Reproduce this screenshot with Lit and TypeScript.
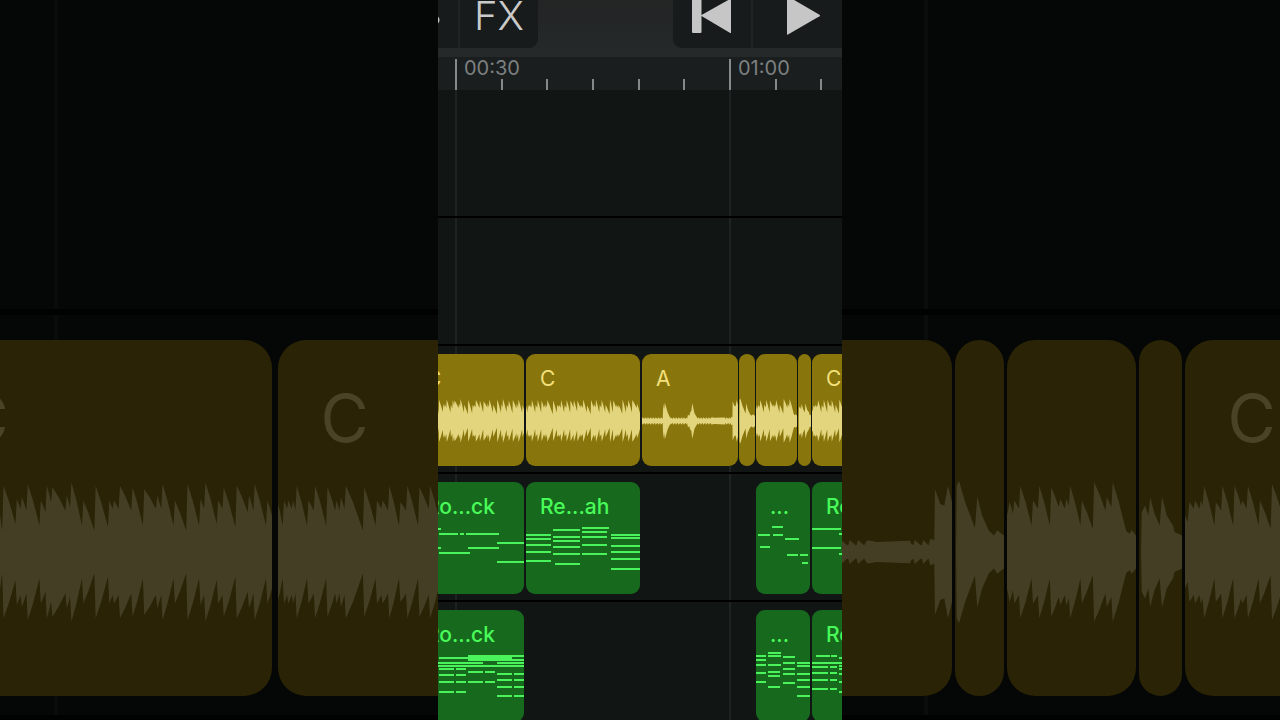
import { LitElement, html, svg, css } from "lit";
import { customElement, property } from "lit/decorators.js";

type Point = [number, number];
type Tooth = [number, number, number];
type Note = [number, number, number];

interface AudioClip {
  label: string;
  size: number;
  wide: number;
  span: number;
  tight?: boolean;
  wave: Point[];
}

interface MidiClip {
  label?: string;
  size: number;
  notes?: Note[];
}

// Each tooth is [time, peak, valley]: a steep attack and a decay down to the valley before the next one.
const teeth = (list: Tooth[], end: number): Point[] =>
  list.flatMap(([x, peak, valley], i): Point[] => {
    const next = i + 1 < list.length ? list[i + 1][0] - 4 : end;
    const gap = next - x;
    return [
      [x, peak],
      [x + gap * 0.45, valley + (peak - valley) * 0.6],
      [next, valley],
    ];
  });

const quiet = (from: number, to: number): Point[] => {
  const out: Point[] = [];
  for (let x = from; x < to; x += 25) out.push([x, 22], [x + 4, 36], [Math.min(x + 22, to), 20]);
  return out;
};

const VERSE = teeth(
  [
    [0, 150, 110], [240, 150, 65], [257, 200, 85], [297, 160, 130], [312, 165, 125], [330, 205, 80], [369, 155, 120],
    [387, 200, 150], [404, 195, 125], [447, 170, 135], [461, 210, 80], [497, 155, 65], [534, 200, 75],
    [575, 155, 130], [589, 155, 130], [607, 200, 125], [645, 195, 80], [680, 190, 130], [719, 170, 130],
    [735, 205, 80], [772, 155, 65], [810, 205, 80], [849, 160, 130], [864, 210, 85], [902, 155, 130],
    [919, 195, 75], [958, 200, 120], [995, 170, 125], [1012, 205, 80], [1050, 155, 110],
  ],
  1064,
);

const CHORUS = teeth(
  [
    [0, 145, 80], [18, 155, 130], [31, 155, 130], [45, 155, 125], [56, 200, 80], [91, 155, 125], [111, 200, 80],
    [148, 195, 125], [175, 155, 125], [188, 165, 130], [203, 200, 65], [258, 195, 80], [296, 155, 130],
    [313, 155, 125], [333, 200, 80], [366, 150, 125], [387, 200, 80], [423, 195, 130], [455, 200, 90],
    [489, 195, 125], [520, 155, 125], [544, 205, 80], [581, 150, 65], [618, 200, 130], [645, 160, 130],
    [665, 205, 80], [700, 155, 125], [719, 200, 80], [756, 155, 65], [798, 205, 80], [829, 195, 130],
    [860, 155, 125], [880, 155, 70], [918, 205, 80], [953, 155, 125], [972, 200, 80], [1010, 200, 125],
    [1055, 165, 75],
  ],
  1083,
);

const BREAK: Point[] = [
  ...quiet(0, 200), [203, 170], [210, 110], [218, 175], [245, 80], [266, 35], ...quiet(268, 430),
  [438, 60], [452, 50], [458, 80], [470, 95], [480, 170], [500, 75], [526, 30], ...quiet(530, 655),
  [662, 35], [690, 30], [789, 34], [795, 22], ...quiet(800, 845), [850, 40], [862, 35], [864, 190],
  [880, 145], [892, 140], [903, 200], [915, 150],
];

const FILL: Point[] = [
  [0, 0], [3, 0], [5, 200], [12, 215], [30, 150], [59, 72], [66, 168], [80, 110], [100, 65], [115, 50], [125, 65], [145, 50],
];

const BRIDGE: Point[] = [
  [0, 110],
  ...teeth(
    [
      [8, 150, 115], [22, 155, 130], [40, 200, 80], [78, 155, 130], [97, 200, 80], [133, 195, 135], [160, 160, 130],
      [178, 160, 140], [190, 200, 80], [225, 155, 70], [262, 210, 125], [300, 165, 135], [318, 210, 65],
      [362, 60, 55], [374, 66, 50],
    ],
    388,
  ),
];

const TURN: Point[] = [
  [0, 0], [6, 0], [8, 120], [18, 140], [28, 110], [33, 165], [46, 115], [61, 80], [68, 168], [82, 110], [100, 80], [105, 60], [127, 50],
];

const OUTRO: Point[] = [
  [0, 110], [8, 90],
  ...teeth(
    [
      [13, 150, 130], [30, 155, 130], [47, 155, 140], [57, 200, 80], [92, 150, 125], [112, 200, 80], [148, 200, 140],
      [172, 155, 130], [188, 200, 80], [224, 155, 70], [260, 205, 130], [290, 155, 80], [320, 195, 120],
    ],
    532,
  ),
];

const AUDIO: AudioClip[] = [
  { label: "C", size: 112, wide: 354, span: 1064, wave: VERSE },
  { label: "C", size: 114, wide: 362, span: 1083, wave: CHORUS },
  { label: "A", size: 96, wide: 306, span: 915, tight: true, wave: BREAK },
  { label: "", size: 16, wide: 49, span: 145, tight: true, wave: FILL },
  { label: "", size: 41, wide: 129, span: 388, tight: true, wave: BRIDGE },
  { label: "", size: 13, wide: 43, span: 127, tight: true, wave: TURN },
  { label: "C", size: 56, wide: 178, span: 532, wave: OUTRO },
];

const stack = (x: number, w: number, ys: number[]): Note[] => ys.map((y) => [x, y, w] as Note);

const ROCK: Note[] = [
  [0, 46, 29], [27, 51, 19], [48, 51, 4], [54, 51, 33], [85, 60, 27], [0, 65, 29], [56, 65, 31], [27, 70, 31], [85, 79, 27],
];

const KEYS: MidiClip[] = [
  { label: "Ro...ck", size: 112, notes: ROCK },
  {
    label: "Re...ah",
    size: 114,
    notes: [
      ...stack(0, 25, [52, 56, 62, 69, 78]),
      ...stack(27, 27, [47, 54, 58, 64, 71]), [29, 81, 25],
      ...stack(56, 25, [49, 54, 62, 71]), [56, 45, 27],
      ...stack(85, 29, [52, 55, 63, 69, 76, 86]),
    ],
  },
  { size: 112 },
  {
    label: "...",
    size: 54,
    notes: [[16, 44, 11], [2, 52, 12], [17, 52, 10], [29, 56, 14], [4, 64, 10], [31, 72, 11], [44, 72, 8], [46, 80, 6]],
  },
  { label: "Re...ah", size: 56, notes: [[0, 46, 29], [27, 51, 19], [0, 65, 29], [27, 71, 29]] },
];

const PADS: MidiClip[] = [
  {
    label: "Ro...ck",
    size: 112,
    notes: [
      [56, 45, 56], [27, 47, 73], [56, 49, 56], [0, 52, 71], [85, 52, 27], [0, 55, 112],
      ...stack(27, 15, [58, 64, 71, 81]), ...stack(44, 10, [58, 64, 71, 81]),
      ...stack(56, 15, [61, 71]), ...stack(73, 10, [61, 71]),
      ...stack(85, 15, [63, 69, 76, 85]), ...stack(102, 10, [63, 69, 76, 85]),
    ],
  },
  { size: 228 },
  {
    label: "...",
    size: 54,
    notes: [
      ...stack(0, 10, [45, 49, 54, 62, 71]),
      ...stack(12, 13, [42, 45, 54]), ...stack(12, 12, [61, 65, 76]),
      ...stack(27, 12, [46, 52, 58, 63, 72]),
      ...stack(41, 13, [52, 55, 63, 69, 76, 85]),
    ],
  },
  {
    label: "Re...ah",
    size: 56,
    notes: [
      [4, 45, 14], [19, 45, 6], [0, 52, 40],
      ...stack(0, 16, [56, 62, 69, 78]), ...stack(18, 7, [56, 62, 69, 78]),
      ...stack(27, 14, [47, 55, 58, 63, 71, 81]),
    ],
  },
];

const outline = (wave: Point[]): string => {
  const top = wave.map(([x, a]) => `${x},${220 - a}`);
  const bottom = [...wave].reverse().map(([x, a]) => `${x},${220 + a}`);
  return [...top, ...bottom].join(" ");
};

@customElement("audio-lane")
export class AudioLane extends LitElement {
  @property({ type: Boolean, reflect: true }) zoomed = false;

  static styles = css`
    :host {
      --radius: 9px;
      --gap: 2px;
      --tight: 1px;
      --clip: #88750b;
      --wave: #e2d57e;
      --name: #f3e07c;
      display: flex;
      justify-content: center;
      height: 112px;
      overflow: hidden;
      font-size: 21px;
      line-height: 24px;
    }
    :host([zoomed]) {
      --radius: 28px;
      --gap: 6px;
      --tight: 3px;
      --clip: #2a2305;
      --wave: #443e25;
      --name: #4a4425;
      height: 356px;
      font-size: 66px;
      line-height: 76px;
    }
    .clip {
      display: grid;
      grid-template-rows: 39% 41%;
      flex: none;
      margin-right: var(--gap);
      border-radius: var(--radius);
      background: var(--clip);
      overflow: hidden;
    }
    .clip.tight {
      margin-right: var(--tight);
    }
    .clip:last-child {
      margin-right: 0;
    }
    .name {
      padding: 13px 0 0 14px;
      color: var(--name);
    }
    :host([zoomed]) .name {
      padding: 40px 0 0 43px;
    }
    .wave {
      display: block;
      width: 100%;
      height: 100%;
      fill: var(--wave);
    }
  `;

  render() {
    return AUDIO.map(
      (c) => html`
        <div class="clip ${c.tight ? "tight" : ""}" style="width:${this.zoomed ? c.wide : c.size}px">
          <span class="name">${c.label}</span>
          <svg class="wave" viewBox="0 0 ${c.span} 440" preserveAspectRatio="none" aria-hidden="true">
            <polygon points=${outline(c.wave)}></polygon>
          </svg>
        </div>
      `,
    );
  }
}

@customElement("midi-lane")
export class MidiLane extends LitElement {
  @property({ attribute: false }) clips: MidiClip[] = [];

  static styles = css`
    :host {
      display: flex;
      justify-content: center;
      gap: 2px;
      height: 112px;
      font-size: 21px;
      line-height: 24px;
    }
    .clip,
    .rest {
      flex: none;
    }
    .clip {
      display: grid;
      border-radius: 9px;
      background: #17691e;
      overflow: hidden;
    }
    .name,
    .notes {
      grid-area: 1 / 1;
    }
    .name {
      padding: 13px 0 0 14px;
      color: #48fb59;
      font-weight: 500;
      white-space: nowrap;
    }
    .notes {
      display: block;
      fill: #4af35b;
    }
  `;

  render() {
    return this.clips.map((c) =>
      c.notes
        ? html`
            <div class="clip" style="width:${c.size}px">
              <span class="name">${c.label}</span>
              <svg class="notes" width=${c.size} height="112" aria-hidden="true">
                ${c.notes.map(([x, y, w]) => svg`<rect x=${x} y=${y} width=${w} height="2"></rect>`)}
              </svg>
            </div>
          `
        : html`<div class="rest" style="width:${c.size}px"></div>`,
    );
  }
}

@customElement("time-ruler")
export class TimeRuler extends LitElement {
  static styles = css`
    :host {
      display: flex;
      height: 33px;
      padding-left: 17px;
      background: #1a1e1f;
      overflow: hidden;
      color: #7d8080;
      font-size: 20px;
      line-height: 18px;
    }
    .span {
      display: grid;
      grid-template-columns: repeat(6, minmax(0, 1fr));
      align-items: end;
      flex: none;
      width: 274px;
    }
    .tick {
      box-sizing: border-box;
      height: 11px;
      border-left: 2px solid #85898a;
    }
    .major {
      height: 31px;
      padding-left: 7px;
      white-space: nowrap;
    }
  `;

  render() {
    return ["00:30", "01:00"].map(
      (t) => html`
        <div class="span">
          <div class="tick major">${t}</div>
          ${[1, 2, 3, 4, 5].map(() => html`<div class="tick"></div>`)}
        </div>
      `,
    );
  }
}

@customElement("transport-bar")
export class TransportBar extends LitElement {
  static styles = css`
    :host {
      display: flex;
      justify-content: space-between;
      align-items: flex-start;
      height: 57px;
      background: linear-gradient(#232525, #252929);
      overflow: hidden;
    }
    .group {
      display: flex;
      gap: 2px;
      height: 48px;
      background: #202424;
      overflow: hidden;
    }
    .left {
      border-radius: 0 0 9px 0;
    }
    .right {
      border-radius: 0 0 0 9px;
    }
    button {
      display: block;
      width: 78px;
      height: 48px;
      margin: 0;
      padding: 0;
      border: 0;
      background: #181b1b;
      color: #cacaca;
      font: 300 40px / 30px Inter, "Liberation Sans", sans-serif;
    }
    .edge {
      width: 20px;
    }
    .fx {
      padding-bottom: 16px;
    }
    .play {
      width: 89px;
    }
    svg {
      display: block;
      fill: #c6c6c6;
    }
  `;

  render() {
    return html`
      <div class="group left">
        <button class="edge" aria-label="Track controls">
          <svg width="20" height="48"><circle cx="-3" cy="20" r="4.5"></circle></svg>
        </button>
        <button class="fx">FX</button>
      </div>
      <div class="group right">
        <button aria-label="Go to start">
          <svg width="78" height="48">
            <path d="M19 0h9.500v15L57-1h1v33.500q0 .8-.8.4L28.500 16v16q0 1-1 1h-7.500q-1 0-1-1z"></path>
          </svg>
        </button>
        <button class="play" aria-label="Play">
          <svg width="89" height="48">
            <path d="M34-4v38q0 1 1 .6L66.500 16.200q1-.7 0-1.400L36-3z"></path>
          </svg>
        </button>
      </div>
    `;
  }
}

@customElement("app-root")
export class AppRoot extends LitElement {
  static styles = css`
    :host {
      display: grid;
      height: 100vh;
      grid-template: 100% / 100%;
      background: #050606;
      overflow: hidden;
      font-family: Inter, "Liberation Sans", sans-serif;
    }
    .backdrop,
    .screen {
      grid-area: 1 / 1;
      overflow: hidden;
    }
    .backdrop {
      background: repeating-linear-gradient(90deg, #0a0c0c 0 4px, transparent 4px 870px) 54px 0 no-repeat, #050606;
    }
    .far {
      box-sizing: border-box;
      border-bottom: 6px solid #010101;
    }
    .far.empty {
      height: 315px;
    }
    .far.audio {
      padding: 25px 0 19px;
    }
    .screen {
      display: flex;
      flex-direction: column;
      justify-self: center;
      height: 100%;
      aspect-ratio: 101 / 180;
      background: #111514;
    }
    .lanes {
      flex: 1;
      overflow: hidden;
      background: repeating-linear-gradient(90deg, #1e2222 0 2px, transparent 2px 274px) 17px 0 no-repeat, #111514;
    }
    .lane {
      box-sizing: border-box;
      height: 128px;
      padding-top: 8px;
      border-bottom: 2px solid #000;
    }
  `;

  render() {
    return html`
      <div class="backdrop" aria-hidden="true">
        <div class="far empty"></div>
        <div class="far audio"><audio-lane zoomed></audio-lane></div>
      </div>
      <main class="screen">
        <transport-bar></transport-bar>
        <time-ruler></time-ruler>
        <div class="lanes">
          <div class="lane"></div>
          <div class="lane"></div>
          <div class="lane"><audio-lane></audio-lane></div>
          <div class="lane"><midi-lane .clips=${KEYS}></midi-lane></div>
          <div class="lane"><midi-lane .clips=${PADS}></midi-lane></div>
        </div>
      </main>
    `;
  }
}
